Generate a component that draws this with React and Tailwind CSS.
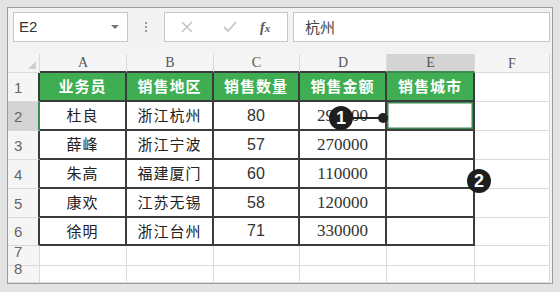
import React from 'react'

const cjk = { fontFamily: '"Noto Sans CJK SC", "Noto Sans", sans-serif' }
const serif = { fontFamily: '"Liberation Serif", "DejaVu Serif", serif' }
const sans = { fontFamily: '"Liberation Sans", Arial, sans-serif' }

const cols = ['A', 'B', 'C', 'D', 'E', 'F']
const heights = ['h-[29px]', 'h-[29px]', 'h-[29px]', 'h-[29px]', 'h-[29px]', 'h-[28px]', 'h-[20px]', 'h-[17px]']

const header = ['业务员', '销售地区', '销售数量', '销售金额', '销售城市']
const rows = [
    ['杜良', '浙江杭州', '80', '290000'],
    ['薛峰', '浙江宁波', '57', '270000'],
    ['朱高', '福建厦门', '60', '110000'],
    ['康欢', '江苏无锡', '58', '120000'],
    ['徐明', '浙江台州', '71', '330000'],
]

function Cell({ r, c }) {
    const inTable = r <= 6 && c <= 4
    const rightDark = r <= 6 && c <= 4
    const bottomDark = r <= 6 && c <= 4
    let cls = 'flex items-center justify-center overflow-hidden whitespace-nowrap '
    cls += rightDark ? 'border-r-2 border-r-[#3b3b3b] ' : 'border-r border-r-[#dadada] '
    cls += bottomDark ? 'border-b-2 border-b-[#3b3b3b] ' : 'border-b border-b-[#dadada] '
    let content = null
    if (r === 1 && c <= 4) {
        cls += 'bg-[#3fae52] text-white font-bold text-[15px] tracking-[1px] '
        content = <span style={cjk}>{header[c]}</span>
    } else if (inTable && c < 4) {
        const v = rows[r - 2][c]
        cls += 'bg-white text-[#222] '
        if (c <= 1) content = <span style={cjk} className="text-[15px] tracking-[1px]">{v}</span>
        else if (c === 2) content = <span style={sans} className="text-[16px] text-[#333]">{v}</span>
        else content = <span style={serif} className="text-[17px] text-[#333]">{v}</span>
    } else {
        cls += 'bg-white '
    }
    if (r === 2 && c === 4) {
        cls = 'flex items-center justify-center border-r-2 border-r-[#3b3b3b] border-b-2 border-b-[#3b3b3b] bg-white shadow-[inset_0_0_0_1.5px_#3c8a4f] '
    }
    return <div className={cls}>{content}</div>
}

export default function App() {
    return (
        <div className="w-[560px] h-[292px] bg-[#e3e3e3] pl-[7px] pt-[7px] overflow-hidden relative">
            <div className="w-[546px] h-[277px] border border-[#9c9c9c] bg-[#f3f3f3] flex flex-col">
                <div className="h-[47px] flex items-start pt-[4px] pl-[5px]">
                    <div className="w-[115px] h-[30px] bg-white border border-[#c6c6c6] flex items-center justify-between px-[5px]">
                        <span style={sans} className="text-[15px] text-[#333]">E2</span>
                        <span className="w-0 h-0 border-l-[4px] border-r-[4px] border-t-[4px] border-l-transparent border-r-transparent border-t-[#777] mr-[3px]" />
                    </div>
                    <div className="w-[36px] h-[30px] flex flex-col items-center justify-center gap-[2px]">
                        <span className="w-[2px] h-[2px] bg-[#999]" />
                        <span className="w-[2px] h-[2px] bg-[#999]" />
                        <span className="w-[2px] h-[2px] bg-[#999]" />
                    </div>
                    <div className="w-[124px] h-[30px] bg-white border border-[#c6c6c6] flex items-center">
                        <svg width="14" height="14" viewBox="0 0 14 14" className="ml-[15px]">
                            <path d="M2 2 L12 12 M12 2 L2 12" stroke="#c4c4c4" strokeWidth="1.6" />
                        </svg>
                        <svg width="16" height="14" viewBox="0 0 16 14" className="ml-[28px]">
                            <path d="M2 7 L6 11 L14 2" stroke="#c4c4c4" strokeWidth="1.8" fill="none" />
                        </svg>
                        <span style={serif} className="ml-[22px] text-[14px] italic font-bold text-[#555]">
                            f<span className="text-[11px]">x</span>
                        </span>
                    </div>
                    <div className="ml-[5px] w-[257px] h-[30px] bg-white border border-[#c6c6c6] flex items-center pl-[11px]">
                        <span style={cjk} className="text-[15px] text-[#444]">杭州</span>
                    </div>
                </div>

                <div className="grid grid-cols-[32px_87px_87px_86px_87px_88px_75px] grid-rows-[19px_29px_29px_29px_29px_29px_28px_20px_17px] bg-white w-[542px]">
                    <div className="relative border-r border-b border-[#dadada] bg-[#f5f5f5]">
                        <span className="absolute right-[3px] bottom-[3px] w-0 h-0 border-l-[8px] border-t-[8px] border-l-transparent border-t-transparent border-b-0 border-r-0 border-[#c9c9c9]" style={{ borderBottom: '8px solid #cfcfcf', borderLeft: '8px solid transparent', borderTop: 0 }} />
                    </div>
                    {cols.map((c, i) => (
                        <div
                            key={c}
                            style={serif}
                            className={
                                'flex items-center justify-center text-[14px] text-[#555] border-r border-r-[#dadada] ' +
                                (i === 4
                                    ? 'bg-[#d4d4d4] border-b-2 border-b-[#3c8a4f]'
                                    : i < 5
                                    ? 'bg-[#f5f5f5] border-b-2 border-b-[#3b3b3b]'
                                    : 'bg-[#f5f5f5] border-b border-b-[#dadada]')
                            }
                        >
                            {c}
                        </div>
                    ))}
                    {heights.map((h, ri) => {
                        const r = ri + 1
                        return (
                            <React.Fragment key={r}>
                                <div
                                    style={sans}
                                    className={
                                        'flex items-end justify-start pl-[6px] pb-[2px] text-[15px] text-[#666] border-b border-b-[#dadada] ' +
                                        (r === 2 ? 'bg-[#d4d4d4] border-r-2 border-r-[#3c8a4f] ' : 'bg-[#f5f5f5] ') +
                                        (r <= 6 && r !== 2 ? 'border-r-2 border-r-[#3b3b3b]' : r !== 2 ? 'border-r border-r-[#dadada]' : '')
                                    }
                                >
                                    {r}
                                </div>
                                {[0, 1, 2, 3, 4, 5].map((c) => (
                                    <Cell key={c} r={r} c={c} />
                                ))}
                            </React.Fragment>
                        )
                    })}
                </div>
            </div>

            <div className="absolute left-[352px] top-[117px] w-[30px] h-[2px] bg-[#222]" />
            <div className="absolute left-[378px] top-[113px] w-[10px] h-[10px] rounded-full bg-[#222]" />
            <div
                style={sans}
                className="absolute left-[329px] top-[106px] w-[24px] h-[24px] rounded-full bg-[#1e1e1e] text-white font-bold text-[18px] flex items-center justify-center"
            >
                1
            </div>
            <div
                style={sans}
                className="absolute left-[467px] top-[169px] w-[24px] h-[24px] rounded-full bg-[#1e1e1e] text-white font-bold text-[18px] flex items-center justify-center"
            >
                2
            </div>
        </div>
    )
}
